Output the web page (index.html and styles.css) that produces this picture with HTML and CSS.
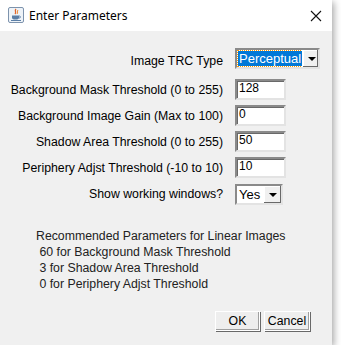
FILE: index.html
```html
<!DOCTYPE html>
<html lang="en">
<head>
    <meta charset="UTF-8">
    <title>Enter Parameters</title>
    <link rel="stylesheet" href="styles.css">
</head>
<body>
    <div class="window">
        <div class="titlebar">
            <svg class="app-icon" width="16" height="16" viewBox="0 0 16 16">
                <rect x="0.5" y="0.5" width="15" height="15" rx="1.5" fill="#eef3f8" stroke="#7d93ad"/>
                <path d="M8 2 C6 4 9 5 7 7" stroke="#e0642a" stroke-width="1.3" fill="none"/>
                <path d="M10 3 C8.5 4.5 10.5 5.5 9 7" stroke="#e88a3a" stroke-width="1" fill="none"/>
                <path d="M4 8.5 H11 V10.5 C11 12 10 12.5 7.5 12.5 C5 12.5 4 12 4 10.5 Z" fill="#5b7ea6"/>
                <path d="M11 9 C13 9 13 11 11 11" stroke="#5b7ea6" stroke-width="1" fill="none"/>
                <path d="M3 13.5 H13" stroke="#5b7ea6" stroke-width="1"/>
            </svg>
            <div class="title">Enter Parameters</div>
            <svg class="close" width="12" height="12" viewBox="0 0 12 12">
                <path d="M1 1 L11 11 M11 1 L1 11" stroke="#111" stroke-width="1.1"/>
            </svg>
        </div>

        <div class="content">
            <div class="form">
                <div class="label">Image TRC Type</div>
                <div class="combo combo-wide">
                    <div class="combo-value"><span class="selected">Perceptual</span></div>
                    <div class="combo-arrow"></div>
                </div>

                <div class="label">Background Mask Threshold (0 to 255)</div>
                <div class="field">128</div>

                <div class="label">Background Image Gain (Max to 100)</div>
                <div class="field">0</div>

                <div class="label">Shadow Area Threshold (0 to 255)</div>
                <div class="field">50</div>

                <div class="label">Periphery Adjst Threshold (-10 to 10)</div>
                <div class="field">10</div>

                <div class="label">Show working windows?</div>
                <div class="combo combo-small">
                    <div class="combo-value">Yes</div>
                    <div class="combo-arrow"></div>
                </div>
            </div>

            <div class="notes">
                <div>Recommended Parameters for Linear Images</div>
                <div>&nbsp;60 for Background Mask Threshold</div>
                <div>&nbsp;3 for Shadow Area Threshold</div>
                <div>&nbsp;0 for Periphery Adjst Threshold</div>
            </div>

            <div class="buttons">
                <div class="button btn-ok">OK</div>
                <div class="button btn-cancel">Cancel</div>
            </div>
        </div>
    </div>
</body>
</html>
```

FILE: styles.css
```css
body {
    margin: 0;
    padding: 0;
    background-color: #fff;
    font-family: 'Liberation Sans', Arial, sans-serif;
    font-size: 12.3px;
    color: #000;
}

.window {
    width: 332px;
    height: 345px;
    display: flex;
    flex-direction: column;
    background-color: #f0f0f0;
    box-shadow: 2px 2px 7px rgba(0, 0, 0, 0.35);
}

.titlebar {
    height: 31px;
    background-color: #fff;
    display: flex;
    align-items: center;
    padding: 0 10px 0 8px;
}

.app-icon {
    margin-top: -1px;
}

.title {
    flex: 1;
    margin-left: 5px;
    font-family: 'Noto Sans', 'Open Sans', sans-serif;
    font-size: 12px;
    color: #000;
}

.content {
    flex: 1;
    display: flex;
    flex-direction: column;
    padding: 17px 0 0 0;
}

.form {
    display: grid;
    grid-template-columns: 223px auto;
    column-gap: 12px;
    row-gap: 5px;
    align-items: center;
}

.label {
    text-align: right;
    white-space: nowrap;
}

.field {
    height: 17px;
    width: 45px;
    background-color: #fff;
    border: 2px solid;
    border-color: #8a8a8a #e3e3e3 #e3e3e3 #8a8a8a;
    box-shadow: inset 1px 1px 0 #696969;
    padding-left: 2px;
    line-height: 15px;
    font-size: 12px;
}

.combo {
    height: 21px;
    box-sizing: border-box;
    display: flex;
    background-color: #fff;
    border: 2px solid;
    border-color: #8a8a8a #e3e3e3 #e3e3e3 #8a8a8a;
}

.combo-wide {
    width: 85px;
    margin-bottom: 5px;
}

.combo-small {
    width: 48px;
    margin-top: 1px;
}

.combo-value {
    flex: 1;
    display: flex;
    align-items: center;
    padding-left: 2px;
    font-size: 13px;
    color: #000;
}

.combo-wide .combo-value {
    padding-left: 1px;
}

.selected {
    background-color: #0078d7;
    color: #fff;
    outline: 1px dotted #ff9900;
    padding: 0 1px;
    line-height: 15px;
}

.combo-arrow {
    width: 17px;
    background-color: #f0f0f0;
    border-left: 1px solid #fff;
    box-shadow: inset -1px -1px 0 #696969, inset 1px 1px 0 #fff;
    position: relative;
}

.combo-arrow::after {
    content: '';
    position: absolute;
    left: 5px;
    top: 7px;
    border-left: 4px solid transparent;
    border-right: 4px solid transparent;
    border-top: 4px solid #000;
}

.notes {
    margin-top: 23px;
    padding-left: 36px;
    line-height: 16px;
    color: #222;
}

.buttons {
    display: flex;
    justify-content: flex-end;
    gap: 4px;
    margin-top: 19px;
    padding-right: 22px;
}

.button {
    height: 20px;
    box-sizing: border-box;
    display: flex;
    align-items: center;
    justify-content: center;
    background-color: #eeeeee;
    border: 1px solid #fff;
    box-shadow: 1px 1px 0 #696969, inset -1px -1px 0 #a0a0a0;
    font-size: 12.3px;
}

.btn-ok {
    width: 45px;
}

.btn-cancel {
    width: 46px;
}
```
